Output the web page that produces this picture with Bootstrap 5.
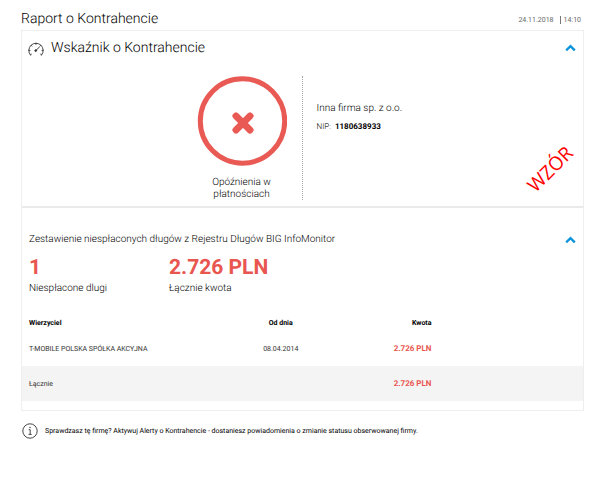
<!DOCTYPE html>
<html lang="pl">
<head>
<meta charset="utf-8">
<meta name="viewport" content="width=device-width, initial-scale=1">
<title>Raport o Kontrahencie</title>
<link href="https://cdn.jsdelivr.net/npm/bootstrap@5.3.0/dist/css/bootstrap.min.css" rel="stylesheet">
<style>
body { font-family: Roboto, "Liberation Sans", sans-serif; font-size: 10px; line-height: 12px; font-weight: 300; color: #000; background: #fff; text-rendering: geometricPrecision; }
.page { padding: 11px 16px 0 21px; }
.page-title { font-size: 14px; line-height: 16px; font-weight: 300; }
.stamp { font-size: 7px; font-weight: 400; color: #666; padding: 2px 3px 0 0; }
.stamp-date { border-right: 1px solid #777; line-height: 8px; padding-right: 6px; margin-right: 3px; }
.title-bar { padding-bottom: 3px; }
.report { border: 1px solid #eee; }
.indicator { border-bottom: 2px solid #eaeaea; padding: 8px 0 6px; }
.sec-head { padding: 0 7px; }
.sec-title { font-size: 14px; line-height: 18px; font-weight: 300; }
.sec-icon { margin: 1px 7px 0 -1px; }
.toggle { color: #0a94dc; line-height: 0; }
.indicator-body { padding-top: 19px; }
.status-col { border-right: 1px dotted #aaa; height: 124px; }
.status-box { width: 120px; }
.status-label { font-size: 10px; margin-top: 11px; padding: 0 20px; }
.firm { padding: 26px 0 0 14px; }
.firm-name { font-size: 10px; line-height: 14px; }
.nip { font-size: 8px; margin-top: 5px; }
.nip-number { font-weight: 700; margin-left: 4px; }
.sample-mark { right: 1px; top: 126px; width: 64px; font: 19px/24px "Open Sans", sans-serif; color: #f00; transform: rotate(-45deg); }
.debts { padding: 25px 0 9px; }
.sec-subtitle { font-size: 10px; line-height: 14px; font-weight: 300; }
.totals { padding: 9px 7px 0; }
.total-item { width: 140px; }
.total-value { font-size: 21px; line-height: 24px; font-weight: 700; color: #e95650; }
.total-label { font-size: 10px; line-height: 14px; margin-top: 2px; }
.debt-table { font-size: 7px; line-height: 12px; margin-top: 18px; font-weight: 400; color: #333; }
.debt-table th, .debt-table td { padding: 0 0 0 7px; height: 34px; vertical-align: middle; }
.debt-table th { height: 18px; font-weight: 700; color: #000; }
.debt-table tfoot { background: #f4f4f4; }
.debt-table tfoot td { height: 35px; }
.debt-table .sum { font-size: 8px; color: #e95650; font-weight: 700; }
.c-name { width: 37%; } .c-date { width: 17%; } .c-sum { width: 19%; }
.notice { font-size: 7px; font-weight: 400; padding: 12px 1px; gap: 7px; }
</style>
<script src="https://cdn.jsdelivr.net/npm/bootstrap@5.3.0/dist/js/bootstrap.bundle.min.js"></script>
</head>
<body>
<main class="page">
  <header class="title-bar d-flex justify-content-between align-items-center">
    <h1 class="page-title m-0">Raport o Kontrahencie</h1>
    <div class="stamp d-flex align-items-center"><time class="stamp-date">24.11.2018</time><time>14:10</time></div>
  </header>
  <div class="report">
    <section class="indicator position-relative">
      <div class="sec-head d-flex align-items-center">
        <svg class="sec-icon" width="16" height="16" viewBox="0 0 16 16" fill="none" stroke="#333" stroke-width=".9" stroke-linecap="round" aria-hidden="true"><path d="M2.400 14A7.200 7.200 0 1 1 13.600 14M2.400 14l1-.8M13.600 14l-1-.8M.8 9.400h1.200M15.200 9.400H14M3 4.300l.8.800M8 2.200v1.200M13 4.300l-.7.700"/><path d="M8.300 9L11.500 6" /><circle cx="7.700" cy="9.600" r=".9" fill="#333"/></svg>
        <h2 class="sec-title m-0">Wskaźnik o Kontrahencie</h2>
        <button type="button" class="toggle btn p-0 border-0 ms-auto" aria-label="Zwiń wskaźnik"><svg width="11" height="8" viewBox="0 0 11 8" fill="none" stroke="currentColor" stroke-width="2.400"><path d="M1.200 6.300L5.500 2.200L9.800 6.300"/></svg></button>
      </div>
      <div class="indicator-body d-flex">
        <div class="status-col w-50 d-flex justify-content-end">
          <div class="status-box text-center">
            <svg class="d-block mx-auto" width="90" height="90" viewBox="0 0 90 90" role="img" aria-label="Status negatywny"><circle cx="45.500" cy="45" r="42.200" fill="none" stroke="#e95a54" stroke-width="5"/><path d="M39 40L53 54M53 40L39 54" stroke="#e95a54" stroke-width="5.400" stroke-linecap="square"/><path d="M39 40L53 54M53 40L39 54" stroke="#e95a54" stroke-width="6.800" stroke-linecap="round"/></svg>
            <div class="status-label">Opóźnienia w płatnościach</div>
          </div>
        </div>
        <div class="firm">
          <div class="firm-name">Inna firma sp. z o.o.</div>
          <div class="nip">NIP:<strong class="nip-number">1180638933</strong></div>
        </div>
      </div>
      <div class="sample-mark position-absolute text-center">WZÓR</div>
    </section>
    <section class="debts">
      <div class="sec-head d-flex align-items-center">
        <h2 class="sec-subtitle m-0">Zestawienie niespłaconych długów z Rejestru Długów BIG InfoMonitor</h2>
        <button type="button" class="toggle btn p-0 border-0 ms-auto" aria-label="Zwiń zestawienie"><svg width="11" height="8" viewBox="0 0 11 8" fill="none" stroke="currentColor" stroke-width="2.400"><path d="M1.200 6.300L5.500 2.200L9.800 6.300"/></svg></button>
      </div>
      <div class="totals d-flex">
        <div class="total-item"><div class="total-value">1</div><div class="total-label">Niespłacone dlugi</div></div>
        <div class="total-item"><div class="total-value">2.726 PLN</div><div class="total-label">Łącznie kwota</div></div>
      </div>
      <table class="debt-table w-100">
        <thead><tr><th class="c-name">Wierzyciel</th><th class="c-date text-center">Od dnia</th><th class="c-sum text-end">Kwota</th><th aria-hidden="true"></th></tr></thead>
        <tbody><tr><td>T-MOBILE POLSKA SPÓŁKA AKCYJNA</td><td class="text-center">08.04.2014</td><td class="sum text-end">2.726 PLN</td><td></td></tr></tbody>
        <tfoot><tr><td>Łącznie</td><td></td><td class="sum text-end">2.726 PLN</td><td></td></tr></tfoot>
      </table>
    </section>
  </div>
  <footer class="notice d-flex align-items-center">
    <svg width="16" height="16" viewBox="0 0 16 16" fill="none" stroke="#333" aria-hidden="true"><circle cx="8" cy="8" r="7.200" stroke-width=".9"/><path d="M6.700 6.700H8.200V11.300M6.500 11.400H9.700" stroke-width=".9"/><circle cx="8" cy="4.500" r=".7" fill="#333" stroke="none"/></svg>
    <span>Sprawdzasz tę firmę? Aktywuj Alerty o Kontrahencie - dostaniesz powiadomienia o zmianie statusu obserwowanej firmy.</span>
  </footer>
</main>
</body>
</html>
